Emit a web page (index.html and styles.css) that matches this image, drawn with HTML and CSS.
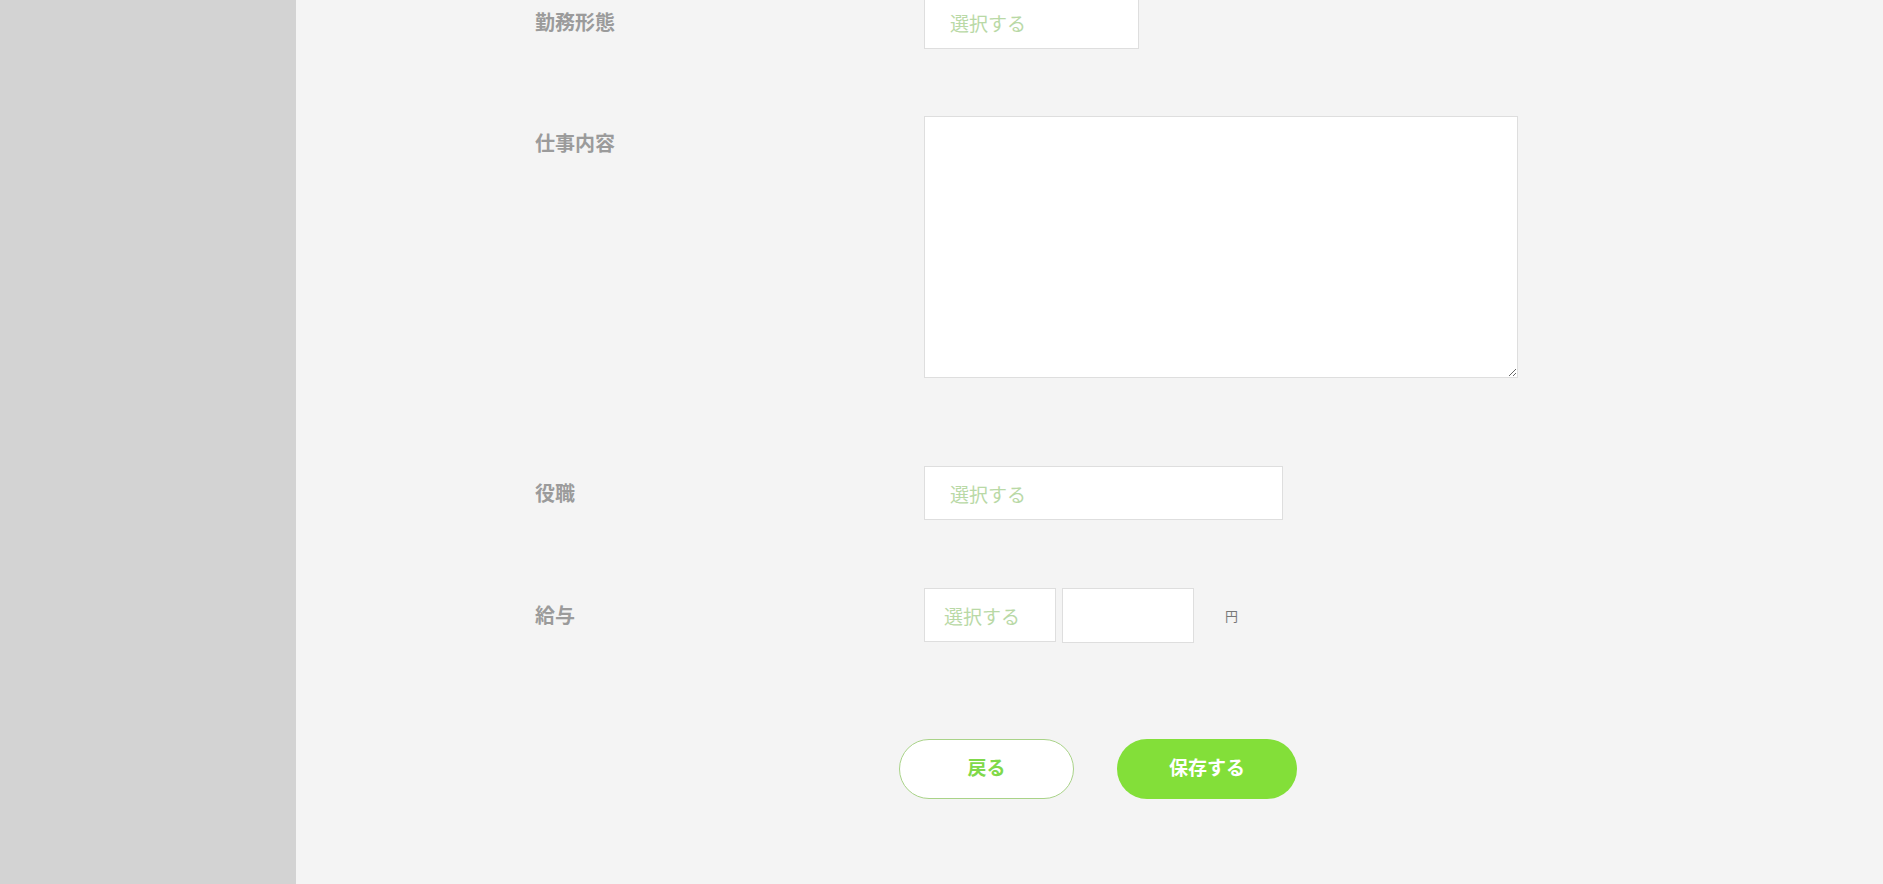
FILE: index.html
```html
<!DOCTYPE html>
<html lang="ja">
<head>
    <meta charset="UTF-8">
    <meta name="viewport" content="width=device-width, initial-scale=1.0">
    <title>求人編集</title>
    <link rel="stylesheet" href="styles.css">
</head>
<body>

    <div class="layout">
        <aside class="sidebar"></aside>

        <main class="main">
            <form class="job-form">
                <div class="form-row row-type">
                    <label class="form-label">勤務形態</label>
                    <select class="form-select select-type">
                        <option>選択する</option>
                    </select>
                </div>

                <div class="form-row row-detail">
                    <label class="form-label">仕事内容</label>
                    <textarea class="form-textarea"></textarea>
                </div>

                <div class="form-row row-position">
                    <label class="form-label">役職</label>
                    <select class="form-select select-position">
                        <option>選択する</option>
                    </select>
                </div>

                <div class="form-row row-salary">
                    <label class="form-label">給与</label>
                    <div class="salary">
                        <select class="form-select select-salary">
                            <option>選択する</option>
                        </select>
                        <input type="text" class="form-input">
                        <span class="unit">円</span>
                    </div>
                </div>

                <div class="actions">
                    <button type="button" class="btn btn-back">戻る</button>
                    <button type="button" class="btn btn-save">保存する</button>
                </div>
            </form>
        </main>
    </div>

</body>
</html>
```

FILE: styles.css
```css
* {
    box-sizing: border-box;
}

body {
    margin: 0;
    height: 100vh;
    overflow: hidden;
    font-family: "Noto Sans CJK JP", "Noto Sans", sans-serif;
    background-color: #f4f4f4;
}

.layout {
    display: flex;
    height: 100vh;
}

.sidebar {
    width: 296px;
    flex-shrink: 0;
    background-color: #d3d3d3;
}

.main {
    flex: 1;
    background-color: #f4f4f4;
    padding-left: 239px;
}

.job-form {
    margin-top: -5px;
}

.form-row {
    display: flex;
    align-items: flex-start;
}

.form-label {
    width: 389px;
    flex-shrink: 0;
    line-height: 54px;
    font-size: 20px;
    font-weight: bold;
    color: #9b9b9b;
}

.form-select,
.form-input,
.form-textarea {
    background-color: #fff;
    border: 1px solid #dedede;
    border-radius: 0;
    outline: none;
}

.form-select {
    appearance: none;
    -webkit-appearance: none;
    height: 54px;
    padding: 0 0 0 25px;
    font-family: inherit;
    font-size: 19px;
    color: #b9d9a6;
}

.select-type {
    width: 215px;
}

.select-position {
    width: 359px;
}

.row-type {
    margin-bottom: 67px;
}

.row-detail {
    margin-bottom: 88px;
}

.form-textarea {
    display: block;
    width: 594px;
    height: 262px;
    resize: both;
}

.row-position {
    margin-bottom: 68px;
}

.salary {
    display: flex;
    align-items: flex-start;
}

.select-salary {
    width: 132px;
    height: 54px;
    padding-left: 19px;
}

.form-input {
    width: 132px;
    height: 55px;
    margin-left: 6px;
}

.unit {
    align-self: center;
    margin-left: 31px;
    font-size: 13px;
    color: #777;
}

.actions {
    display: flex;
    gap: 43px;
    margin-top: 96px;
    padding-left: 364px;
}

.btn {
    height: 60px;
    padding-bottom: 6px;
    border-radius: 30px;
    font-family: inherit;
    font-size: 19px;
    font-weight: bold;
    cursor: pointer;
}

.btn-back {
    width: 175px;
    background-color: #fff;
    border: 1px solid #a9d388;
    color: #80d94a;
}

.btn-save {
    width: 180px;
    background-color: #83df39;
    border: none;
    color: #fff;
}
```
